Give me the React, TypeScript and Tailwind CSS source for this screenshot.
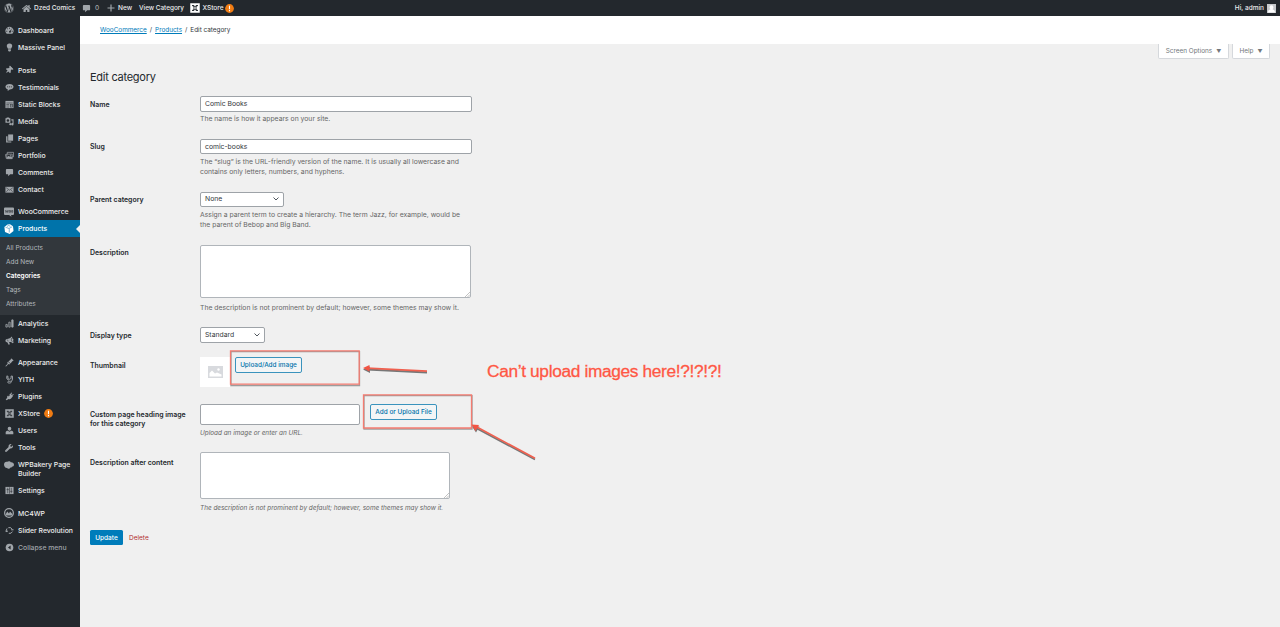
import type { ReactNode } from "react"
import { FaHome, FaThumbtack, FaWordpress, FaWrench } from "react-icons/fa"

const XMark = () => (
  <>
    <rect x="0.5" y="0.5" width="19" height="19" fill="currentColor" />
    <path d="M4 5h4l2 3 2-3h4M4 15h4l2-3 2 3h4M5.500 5l3 5-3 5M14.500 5l-3 5 3 5" fill="none" stroke="#23282d" strokeWidth="1.800" />
  </>
)

// All glyphs share a 20x20 grid
const glyphs: Record<string, ReactNode> = {
  dashboard: (
    <>
      <path d="M3.7 17h12.6a8.800 8.800 0 1 0-12.600 0z" fill="currentColor" />
      <path d="M9 4h2v2H9zM4.600 6l1.600-1 .9 1.500-1.500 1zM3 10.500h2v2H3zM15 10.500h2v2h-2zM15.400 5.200l-4 5.200a2.200 2.200 0 1 0 1.600 1z" fill="#23282d" />
    </>
  ),
  bulb: (
    <g fill="currentColor">
      <path d="M10 1a5.800 5.800 0 0 1 6 5.800c0 2.500-2 3.800-2.500 6.200h-7C6 10.600 4 9.300 4 6.800A5.800 5.800 0 0 1 10 1z" />
      <path d="M7 14h6v2.500L11.500 19h-3L7 16.500z" />
    </g>
  ),
  chat: (
    <>
      <path d="M10 2c5 0 9 2.600 9 6.200s-4 6.100-8.500 6.100L6 18v-4.200C3 13 1 10.800 1 8.200 1 4.600 5 2 10 2z" fill="currentColor" />
      <path d="M4.500 7.500h2.500v2h-2.500zM8.800 7.500h2.500v2H8.800zM13 7.500h2.500v2H13z" fill="#23282d" />
    </>
  ),
  blocks: (
    <>
      <path d="M1 2h18v16H1z" fill="currentColor" />
      <path d="M3 6h14v1H3zM3 9h6v1H3zM3 12h6v1H3zM3 15h6v1H3zM11 9h6v7h-6z" fill="#23282d" />
      <path d="M12 10h4v2h-4zM12 13h4v2h-4z" fill="currentColor" />
    </>
  ),
  media: (
    <g fill="currentColor">
      <path fillRule="evenodd" d="M1 3h2l1-2h5l1 2h2v10H1zM6.500 4.800a3 3 0 1 0 0 6 3 3 0 0 0 0-6z" />
      <path d="M14 5h5v11a2.700 2.700 0 1 1-2.300-2.600V8H14zM9.500 14.500h2.300v-1h1.700v3.500a2.300 2.300 0 1 1-4-2.500z" />
    </g>
  ),
  pages: (
    <g fill="currentColor">
      <path d="M7 1h11v14H7z" />
      <path d="M2.500 5H5.500v11.500H14V19H2.500z" />
    </g>
  ),
  portfolio: (
    <g fill="none" stroke="currentColor" strokeWidth="1.600">
      <path d="M5 7V3h14v10h-3M3 17L1 8l3-1M4 7h12v10H4z" />
      <path d="M4 16l4-5 3 3 2-2 3 4z" fill="currentColor" />
      <circle cx="12.500" cy="9.500" r=".8" />
    </g>
  ),
  comment: <path d="M4 2h12a2 2 0 0 1 2 2v8a2 2 0 0 1-2 2h-4.500L7 18.500V14H4a2 2 0 0 1-2-2V4a2 2 0 0 1 2-2z" fill="currentColor" />,
  mail: (
    <>
      <path d="M1 4h18v13H1z" fill="currentColor" />
      <path d="M2.500 6l7.500 5.500L17.500 6M3 15l4-4M17 15l-4-4" fill="none" stroke="#23282d" strokeWidth="1.200" />
    </>
  ),
  woo: (
    <>
      <path d="M2 1h16a2 2 0 0 1 2 2v11a2 2 0 0 1-2 2h-4l1 3.500-5-3.500H2a2 2 0 0 1-2-2V3a2 2 0 0 1 2-2z" fill="currentColor" />
      <path d="M2.500 6l1.500 5 2-4 1.500 4 1-5M10.500 7h2.500v3.500h-2.500zM15.300 7h2.200v3.500h-2.200z" fill="none" stroke="#23282d" strokeWidth="1.100" />
    </>
  ),
  product: (
    <>
      <path d="M7 .8L12 .5l6 3.800 1 9.700-7.500 6L2 16 .8 6z" fill="currentColor" />
      <path d="M3 6.500l7 2.500 6.500-3.500M10.500 9.500V17M6 5l3-2 4 1.500" fill="none" stroke="#0073aa" strokeWidth="1" />
    </>
  ),
  chart: (
    <g fill="none" stroke="currentColor" strokeWidth="1.800">
      <path d="M2 12h3v6H2zM8.500 7h3v11h-3z" />
      <path d="M15 2h3v16h-3z" fill="currentColor" />
    </g>
  ),
  horn: (
    <>
      <path d="M15 1l2 5c2 .5 2.500 3 1 4.200L19 15l-2 1c-2-2-5-3-8-2.500l2 5-3 1-3-5.500C2 14.500 0 11 1.500 8.500 3 6 6 6.500 9 5.500c2.500-1 4.500-2.500 6-4.500z" fill="currentColor" />
      <path d="M15 4.500c-1.500 2.500-1.500 6 1.500 8.500M5.500 8l1.500 4" fill="none" stroke="#23282d" strokeWidth="1.200" />
    </>
  ),
  brush: (
    <g fill="currentColor">
      <path d="M14.500 1L19 5.500 17.500 7l-1-.5-4 5.500-5-4.500L13 3.500 12.500 2z" />
      <path d="M6.500 8.500l5 4.500-2 1.500-2-1L3 18.500c-1 1-2.500-.5-1.500-1.500L6 12.500l-1-2z" />
    </g>
  ),
  yith: (
    <path
      d="M3.500 2.500h3V7c0 3 6 3.500 7 0V2.500h3V9c-.5 5-3 5-6 5-3-.5-4.500.5-4.500 2s3 2.500 6 1.500c2-.8 2.500-2 2.500-4M4 3v4c0 3 3 4 5 4"
      fill="none"
      stroke="currentColor"
      strokeWidth="2.200"
    />
  ),
  plug: <path d="M12 4l2.500-3L16 2.300 13.700 5.200l1.600 1.600 3-2.300L19.500 6 16.500 8.500l1 1-4 5c-2 2-4 2-6 1L4 18.500l-2.500-2L5 13c-1-2 0-4 2-5l1 2 2.500-2-1-2z" fill="currentColor" />,
  xstore: <XMark />,
  users: <path d="M10 1.500a4 4 0 0 1 4 4.300c0 2.500-1.800 4.700-4 4.700S6 8.300 6 5.800a4 4 0 0 1 4-4.300zM1.500 18.500V14c0-2 2-3.500 5-3.500L10 13l3.500-2.500c3 0 5 1.500 5 3.500v4.500z" fill="currentColor" />,
  bakery: <path d="M0 9c0-4 3-6.500 6.500-5.500 2-1.500 6-1.500 7 1 3.500-.5 6.500 1.500 6.500 5 0 2.500-2 4-4 4-1 1.500-2 2-3 1.500-1.500 2.500-5 3.500-7 1C2.500 15.500 0 13 0 9z" fill="currentColor" />,
  settings: (
    <>
      <path d="M1 2h18v16H1z" fill="currentColor" />
      <path d="M6 4v12M14 4v12M3.500 8h5M11.500 12h5M10 3v14" stroke="#23282d" strokeWidth="1.200" />
    </>
  ),
  mc: (
    <>
      <circle cx="10" cy="10" r="8.700" fill="none" stroke="currentColor" strokeWidth="2.500" />
      <path d="M3 13l3.500-6 3.500 4 2-4 5 5v3H4z" fill="currentColor" />
    </>
  ),
  slider: (
    <g fill="none" stroke="currentColor" strokeWidth="2.200">
      <path d="M7.500 3.700a7 7 0 0 1 8.500 3.800M16.500 12.500a7 7 0 0 1-8 3.800M4 13.500a7 7 0 0 1 .5-8" />
      <path d="M13.500 8.500H19M1 11.500h5.500" />
    </g>
  ),
  collapse: (
    <>
      <circle cx="10" cy="10" r="8.500" fill="currentColor" />
      <path d="M12.500 5.500v9L6.500 10z" fill="#23282d" />
    </>
  ),
}

function Glyph({ name }: { name: string }) {
  if (name === "pin") return <FaThumbtack className="size-[8px] rotate-45" />
  if (name === "wrench") return <FaWrench className="size-[8px]" />
  return (
    <svg viewBox="0 0 20 20" className={name === "woo" || name === "product" || name === "bakery" || name === "mc" ? "size-[10px]" : "size-[9px]"}>
      {glyphs[name]}
    </svg>
  )
}

const menu = [
  [
    ["dashboard", "Dashboard"],
    ["bulb", "Massive Panel"],
  ],
  [
    ["pin", "Posts"],
    ["chat", "Testimonials"],
    ["blocks", "Static Blocks"],
    ["media", "Media"],
    ["pages", "Pages"],
    ["portfolio", "Portfolio"],
    ["comment", "Comments"],
    ["mail", "Contact"],
  ],
  [
    ["woo", "WooCommerce"],
    ["product", "Products"],
    ["chart", "Analytics"],
    ["horn", "Marketing"],
  ],
  [
    ["brush", "Appearance"],
    ["yith", "YITH"],
    ["plug", "Plugins"],
    ["xstore", "XStore"],
    ["users", "Users"],
    ["wrench", "Tools"],
    ["bakery", "WPBakery Page Builder"],
    ["settings", "Settings"],
  ],
  [
    ["mc", "MC4WP"],
    ["slider", "Slider Revolution"],
    ["collapse", "Collapse menu"],
  ],
]

const submenu = ["All Products", "Add New", "Categories", "Tags", "Attributes"]

function Alert() {
  return (
    <svg viewBox="0 0 9 9" className="size-[9px] shrink-0">
      <circle cx="4.500" cy="4.500" r="4.400" fill="#f07c13" />
      <path d="M4.500 1.800v3.400M4.500 6.100v1.200" stroke="#fff" strokeWidth="1.100" />
    </svg>
  )
}

function MenuItem({ icon, label }: { icon: string; label: string }) {
  const active = label === "Products"
  const tall = icon === "bakery"
  const muted = icon === "collapse"
  return (
    <li>
      <a
        className={`relative flex text-[6.85px] font-medium leading-[9px] ${tall ? "h-[26px]" : "h-[17px]"} ${
          active ? "bg-[#0073aa] text-white" : muted ? "text-[#a0a5aa]" : "text-[#eee]"
        }`}
      >
        <span className={`flex h-[17px] w-[18px] shrink-0 items-center justify-center ${active ? "text-white" : "text-[#a0a5aa]"}`}>
          <Glyph name={icon} />
        </span>
        <span className="pt-[4.3px]">{label}</span>
        {icon === "xstore" && (
          <span className="pl-[4px] pt-[4.3px]">
            <Alert />
          </span>
        )}
        {active && <span className="absolute right-0 top-[4.5px] border-y-4 border-r-4 border-y-transparent border-r-[#f0f0f0]" />}
      </a>
      {active && (
        <ul className="h-[77.5px] bg-[#32373c] pt-[4.4px] text-[6.5px] leading-[14px] text-[#b4b9be]">
          {submenu.map((s) => (
            <li key={s} className={s === "Categories" ? "pl-1.5 font-semibold text-white" : "pl-1.5"}>
              {s}
            </li>
          ))}
        </ul>
      )}
    </li>
  )
}

function AdminBar() {
  return (
    <header className="flex h-4 items-center bg-[#23282d] text-[6.5px] font-medium leading-[17px] text-[#eee]">
      <FaWordpress className="ml-[3.500px] size-[10px] text-[#a0a5aa]" />
      <FaHome className="ml-[8px] size-[9px] text-[#a0a5aa]" />
      <span className="ml-[3.5px] w-[48px] whitespace-nowrap">Dzed Comics</span>
      <svg viewBox="0 0 20 20" className="size-[9px] text-[#a0a5aa]">
        {glyphs.comment}
      </svg>
      <span className="ml-[4px] w-[12px] text-[#a0a5aa]">0</span>
      <svg viewBox="0 0 8 8" className="size-[8px] text-[#a0a5aa]">
        <path d="M4 .5v7M.5 4h7" stroke="currentColor" strokeWidth="1.200" />
      </svg>
      <span className="ml-[3px] w-[21px]">New</span>
      <span className="w-[51px] whitespace-nowrap text-[6.4px]">View Category</span>
      <svg viewBox="0 0 20 20" className="size-[10px] text-white">
        <XMark />
      </svg>
      <span className="ml-[2.5px] w-[22.5px]">XStore</span>
      <Alert />
      <span className="ml-auto mr-[3px]">Hi, admin</span>
      <svg viewBox="0 0 9 9" className="mr-1 size-[9px]">
        <path d="M0 0h9v9H0z" fill="#c6c9cc" />
        <path d="M4.500 1.300a1.800 2.100 0 0 1 1 3.900C7 5.800 8 6.500 8 8.500H1c0-2 1-2.700 2.500-3.300a1.800 2.100 0 0 1 1-3.900z" fill="#fff" />
      </svg>
    </header>
  )
}

function Row({ label, className, labelClass = "pt-[3.5px]", children }: { label: string; className: string; labelClass?: string; children: ReactNode }) {
  return (
    <div className={`flex ${className}`}>
      <div className={`w-[110px] shrink-0 pr-2 text-[6.95px] font-semibold leading-[9px] text-[#23282d] ${labelClass}`}>{label}</div>
      <div className="text-[6.82px] leading-[10.5px] text-[#666]">{children}</div>
    </div>
  )
}

function Field({ value }: { value: string }) {
  return <div className="mb-[2.5px] h-[15.5px] w-[272px] rounded-[2px] border border-[#9ea3a8] bg-white pl-1 leading-[14px] text-[#32373c]">{value}</div>
}

function Select({ value, className }: { value: string; className: string }) {
  return (
    <div className={`mb-[2.5px] flex h-[15.5px] items-center justify-between rounded-[2px] border border-[#9ea3a8] bg-white px-1 leading-[14px] text-[#32373c] ${className}`}>
      {value}
      <svg viewBox="0 0 6 4" className="h-1 w-1.5">
        <path d="M.5 .5L3 3 5.500 .5" fill="none" stroke="#50575e" />
      </svg>
    </div>
  )
}

function TextArea({ className }: { className: string }) {
  return (
    <div className={`flex items-end justify-end rounded-[2px] border border-[#b0b5ba] bg-white ${className}`}>
      <svg viewBox="0 0 5 5" className="size-[5px]">
        <path d="M0 5L5 0M2.500 5L5 2.500" stroke="#999" strokeWidth=".6" />
      </svg>
    </div>
  )
}

function Button({ children }: { children: string }) {
  return (
    <button type="button" className="flex h-[15.5px] w-[67px] items-center justify-center rounded-[2px] border border-[#3a93bd] bg-[#f3f5f6] text-[6.4px] font-medium leading-[14px] text-[#0073aa]">
      {children}
    </button>
  )
}

// Hand-drawn style callouts laid over the form
function Callouts() {
  return (
    <div className="pointer-events-none absolute inset-0">
      <svg viewBox="0 0 1280 627" className="h-[627px] w-[1280px]">
        <g fill="none" stroke="#777" strokeWidth="1.300">
          <path d="M231 351.700h128.500v33.800H231zM364 395.700h108v33.300H364z" opacity=".7" />
          <path d="M367 369.500l60 3M476 428l59 31.500" strokeWidth="1.800" />
        </g>
        <path d="M363 369.500l7-3v6.500zM472 426.500l7.500 0-3.500 6z" fill="#777" />
        <g fill="none" stroke="#f47b70" strokeWidth="1.300">
          <path d="M230.500 350.800h128.700v33.400H230.500zM363.500 394.800h108v33.200h-108z" />
          <path d="M367 368.200l60 3M475 426l60 32.300" stroke="#f0604f" strokeWidth="1.700" />
        </g>
        <path d="M363 368l6.500-3v6.500zM471.500 424.500l7.500.5-3.500 6z" fill="#f25444" />
      </svg>
      <p className="absolute left-[487px] top-[360px] whitespace-nowrap font-['Liberation_Sans',Arial,sans-serif] text-[17.3px] leading-[22px] tracking-[-0.34px] text-[#ff5744] [-webkit-text-stroke:0.3px_#ff5744]">
        Can’t upload images here!?!?!?!
      </p>
    </div>
  )
}

export default function App() {
  return (
    <div className="relative h-[627px] w-[1280px] overflow-hidden bg-[#f0f0f0] font-[Inter,'Liberation_Sans',sans-serif]">
      <AdminBar />
      <div className="flex h-[611px]">
        <nav className="flex w-20 shrink-0 flex-col gap-[5.5px] bg-[#23282d] pt-1.5">
          {menu.map((group, i) => (
            <ul key={i}>
              {group.map(([icon, label]) => (
                <MenuItem key={label} icon={icon} label={label} />
              ))}
            </ul>
          ))}
        </nav>

        <main className="flex-1">
          <div className="flex h-7 gap-[3px] bg-white pl-5 text-[6.4px] leading-[29px] text-[#32373c]">
            <a className="text-[#007cba] underline">WooCommerce</a>
            <span>/</span>
            <a className="text-[#007cba] underline">Products</a>
            <span>/</span>
            <span>Edit category</span>
          </div>
          <div className="flex h-[15px] justify-end gap-[3px] pr-[10px] text-[6.4px] leading-[15px] text-[#72777c]">
            <div className="flex w-[71px] justify-center gap-1 rounded-b-[2px] border border-t-0 border-[#d5d8dc] bg-white">
              Screen Options <span className="text-[5px]">▼</span>
            </div>
            <div className="flex w-[38px] justify-center gap-1 rounded-b-[2px] border border-t-0 border-[#d5d8dc] bg-white">
              Help <span className="text-[5px]">▼</span>
            </div>
          </div>

          <div className="pl-[10px]">
            <h1 className="h-[37px] pt-[9.5px] text-[11px] leading-4 tracking-[-0.26px] text-[#23282d]">Edit category</h1>
            <Row label="Name" className="h-[42.5px]">
              <Field value="Comic Books" />
              <p>The name is how it appears on your site.</p>
            </Row>
            <Row label="Slug" className="h-[53px]">
              <Field value="comic-books" />
              <p>
                The “slug” is the URL-friendly version of the name. It is usually all lowercase and
                <br />
                contains only letters, numbers, and hyphens.
              </p>
            </Row>
            <Row label="Parent category" className="h-[53px]">
              <Select value="None" className="w-[84px]" />
              <p>
                Assign a parent term to create a hierarchy. The term Jazz, for example, would be
                <br />
                the parent of Bebop and Big Band.
              </p>
            </Row>
            <Row label="Description" className="h-[82.5px]">
              <TextArea className="mb-[4.5px] h-[53.5px] w-[271px]" />
              <p>The description is not prominent by default; however, some themes may show it.</p>
            </Row>
            <Row label="Display type" className="h-[30px]">
              <Select value="Standard" className="w-[65px]" />
            </Row>
            <Row label="Thumbnail" className="h-[47px]">
              <div className="flex gap-[5px]">
                <div className="flex size-[30px] items-center justify-center bg-white">
                  <svg viewBox="0 0 15 12" className="h-3 w-[15px]">
                    <path d="M0 0h15v12H0z" fill="#d8dade" />
                    <path d="M1.500 9.500V7l2.500-2.500 3 3 2-1 4.500 2v2h-12z" fill="#fff" />
                    <circle cx="10.500" cy="3.500" r="1.200" fill="#fff" />
                  </svg>
                </div>
                <Button>Upload/Add image</Button>
              </div>
            </Row>
            <Row label="Custom page heading image for this category" labelClass="pt-[5.5px]" className="h-12">
              <div className="mb-[3px] flex gap-[10px]">
                <div className="h-[20.5px] w-[160px] rounded-[2px] border border-[#9ea3a8] bg-white" />
                <Button>Add or Upload File</Button>
              </div>
              <p className="text-[6.4px] italic">Upload an image or enter an URL.</p>
            </Row>
            <Row label="Description after content" labelClass="pt-[5.5px]" className="h-[78px]">
              <TextArea className="mb-[4px] h-[46.5px] w-[250px]" />
              <p className="text-[6.4px] italic">The description is not prominent by default; however, some themes may show it.</p>
            </Row>
            <div className="flex gap-1.5 text-[6.5px] leading-[16px]">
              <button type="button" className="h-[15px] w-[33px] rounded-[1.5px] bg-[#007cba] font-medium text-white">
                Update
              </button>
              <a className="text-[#b32d2e]">Delete</a>
            </div>
          </div>
        </main>
      </div>
      <Callouts />
    </div>
  )
}
